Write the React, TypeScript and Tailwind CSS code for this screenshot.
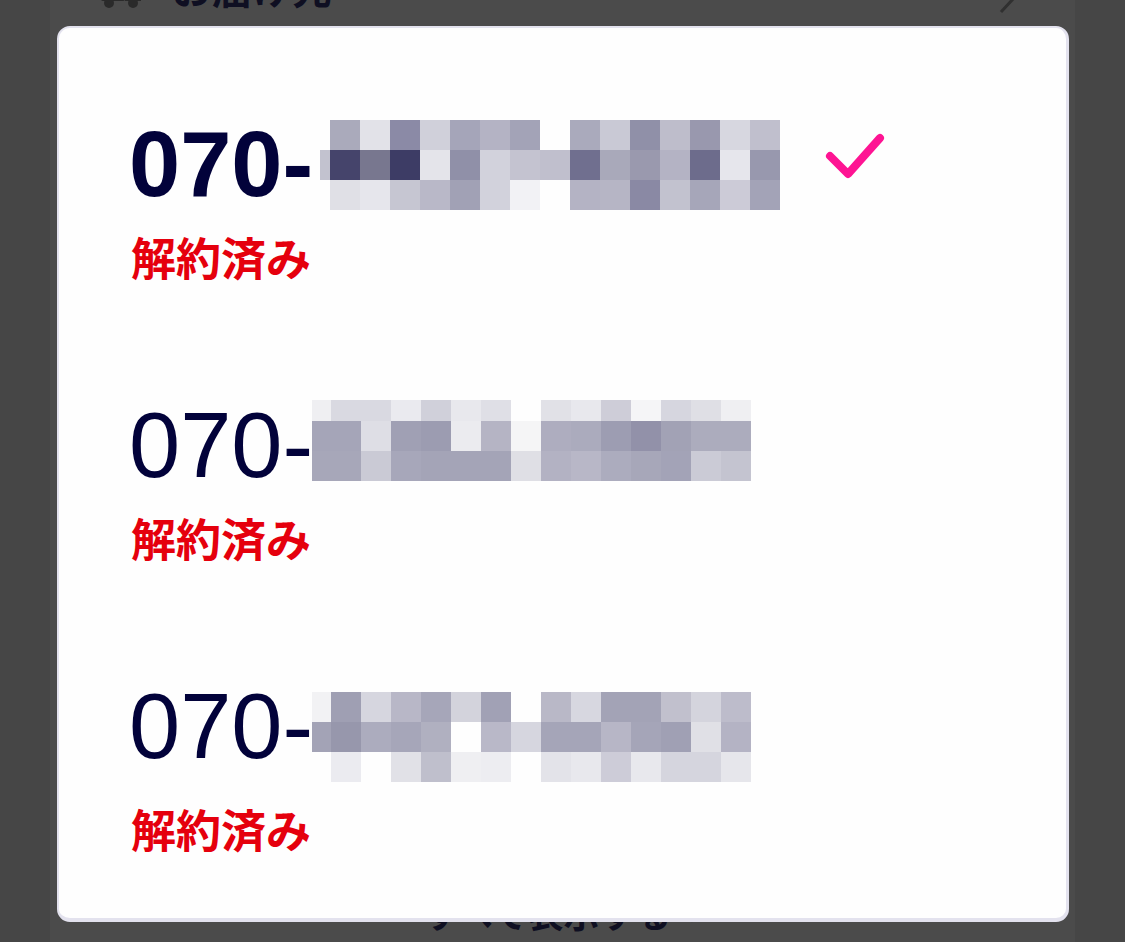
type Cell = string | null;

type Line = {
  bold: boolean;
  mosaicTop: string;
  narrow: string;
  rowHeights: string[];
  cells: Cell[][];
  checked?: boolean;
};

const lines: Line[] = [
  {
    bold: true,
    mosaicTop: "mt-[2px] ml-[7px]",
    narrow: "w-[10px]",
    rowHeights: ["h-[30px]", "h-[30px]", "h-[30px]"],
    checked: true,
    cells: [
      [null, "#aaaabb", "#e2e2e8", "#8b8aa6", "#d0d0da", "#a5a5b9", "#b4b3c4", "#a3a3b7", null, "#aaaabc", "#c9c9d5", "#9090a8", "#bebdcb", "#9998ae", "#d7d7e0", "#c0bfcd"],
      ["#c2c2cf", "#45446b", "#78778f", "#3d3c65", "#e4e4ea", "#9090a8", "#d2d2dc", "#c4c3d0", "#c0bfcd", "#706f8f", "#a9a9ba", "#9a99ae", "#b4b3c4", "#6d6c8c", "#e6e6ec", "#9898ae"],
      [null, "#e0e0e6", "#e6e6ec", "#c6c6d2", "#b9b8c8", "#a1a1b5", "#d2d2dc", "#f2f2f5", null, "#b4b3c4", "#b6b5c5", "#8a89a4", "#c2c2cf", "#a6a6b9", "#cccbd7", "#a3a3b7"],
    ],
  },
  {
    bold: false,
    mosaicTop: "mt-[1px] -ml-[1px]",
    narrow: "w-[19px]",
    rowHeights: ["h-[21px]", "h-[30px]", "h-[30px]"],
    cells: [
      ["#efeff2", "#d9d9e1", "#d9d9e1", "#eaeaef", "#d0d0da", "#e8e8ed", "#dfdfe6", null, "#e1e1e7", "#e8e8ed", "#cecdd8", "#f5f5f7", "#d6d6df", "#dfdfe5", "#efeff2"],
      ["#a5a5b8", "#a5a5b8", "#dedee5", "#a0a0b4", "#9c9cb1", "#ebebef", "#b5b4c4", "#f5f5f6", "#aeadbf", "#ababbd", "#9d9db2", "#9291a9", "#a2a2b5", "#acacbd", "#acacbd"],
      ["#a7a7b9", "#a7a7b9", "#cacad5", "#a7a7ba", "#a4a4b7", "#a4a4b7", "#a4a4b7", "#dfdfe5", "#b3b2c3", "#b8b7c7", "#acacbe", "#a7a7b9", "#a3a3b7", "#cbcbd6", "#c4c4d0"],
    ],
  },
  {
    bold: false,
    mosaicTop: "mt-[12px] -ml-[1px]",
    narrow: "w-[19px]",
    rowHeights: ["h-[30px]", "h-[30px]", "h-[30px]"],
    cells: [
      ["#f2f2f4", "#9f9fb3", "#d6d6df", "#b8b7c7", "#a6a6b9", "#d3d3dc", "#a1a1b5", null, "#b9b8c7", "#d7d7e0", "#a3a3b6", "#a3a3b6", "#c1c0cd", "#d4d4dd", "#bdbccb"],
      ["#a3a3b6", "#9797ac", "#acacbe", "#a6a6b9", "#b0b0c0", null, "#b9b8c8", "#d6d6df", "#a5a5b8", "#a5a5b8", "#b7b6c6", "#a5a5b8", "#a0a0b4", "#e0e0e6", "#b4b3c4"],
      [null, "#ebebf0", null, "#e1e1e7", "#bfbfcc", "#efeff2", "#ededf1", null, "#e3e3e9", "#e8e8ed", "#cdccd8", "#e8e8ed", "#d5d5de", "#d5d5de", "#e6e6eb"],
    ],
  },
];

export default function App() {
  return (
    <div className="relative h-[942px] w-[1125px] overflow-hidden bg-[#464646] font-['Liberation_Sans','Noto_Sans_CJK_JP',sans-serif]">
      {/* page behind the overlay */}
      <div className="mx-[50px] flex h-full flex-col justify-between bg-[#4b4b4b]">
        <div className="-mt-[34px] flex items-center pr-[60px] pl-[50px]">
          <TruckIcon />
          <span className="ml-[30px] text-[40px] leading-none font-bold text-[#0f0f22]">お届け先</span>
          <svg className="mt-[18px] ml-auto self-start" width="16" height="30" viewBox="0 0 16 30">
            <path d="M2 2 L14 15 L2 28" fill="none" stroke="#303030" strokeWidth="3" />
          </svg>
        </div>
        <div className="mb-[8px] flex items-center justify-center gap-[10px] text-[36px] leading-none font-bold text-[#0f0f22]">
          すべて表示する
          <svg width="20" height="14" viewBox="0 0 20 14">
            <path d="M2 2 L10 11 L18 2" fill="none" stroke="#0f0f22" strokeWidth="3" />
          </svg>
        </div>
      </div>

      {/* modal */}
      <div className="absolute top-[26px] left-[57px] h-[896px] w-[1012px] rounded-[13px] border-2 border-r-[3px] border-b-4 border-[#e3e2ee] bg-[#fefefe] pt-[90px] pl-[70px]">
        <div className="flex flex-col gap-[116px]">
          {lines.map((line, i) => (
            <div key={i}>
              <div className="flex items-start">
                <span
                  className={`h-[92px] text-[92px] leading-none text-[#02023a] ${line.bold ? "font-bold" : "font-normal"}`}
                >
                  070-
                </span>
                <Mosaic line={line} />
                {line.checked && (
                  <svg className="mt-[15px] ml-[45px]" width="60" height="46" viewBox="0 0 60 46">
                    <polyline
                      points="5,23 23,41 55,5"
                      fill="none"
                      stroke="#fe1493"
                      strokeWidth="8"
                      strokeLinecap="round"
                      strokeLinejoin="round"
                    />
                  </svg>
                )}
              </div>
              <p className="mt-[28px] ml-[2px] text-[45px] leading-none font-bold text-[#e5000d]">解約済み</p>
            </div>
          ))}
        </div>
      </div>
    </div>
  );
}

function Mosaic({ line }: { line: Line }) {
  return (
    <div className={`flex flex-col ${line.mosaicTop}`}>
      {line.cells.map((row, r) => (
        <div key={r} className={`flex ${line.rowHeights[r]}`}>
          {row.map((c, k) => (
            <div
              key={k}
              className={`h-full ${k === 0 ? line.narrow : "w-[30px]"}`}
              style={{ backgroundColor: c ?? "transparent" }}
            />
          ))}
        </div>
      ))}
    </div>
  );
}

function TruckIcon() {
  return (
    <svg width="42" height="40" viewBox="0 0 42 40" className="mt-[2px]">
      <rect x="1" y="6" width="24" height="24" rx="2" fill="#2a2a2a" />
      <path d="M25 14 H34 L41 22 V30 H25 Z" fill="#2a2a2a" />
      <circle cx="9" cy="32" r="5" fill="#2a2a2a" />
      <circle cx="33" cy="32" r="5" fill="#2a2a2a" />
    </svg>
  );
}
